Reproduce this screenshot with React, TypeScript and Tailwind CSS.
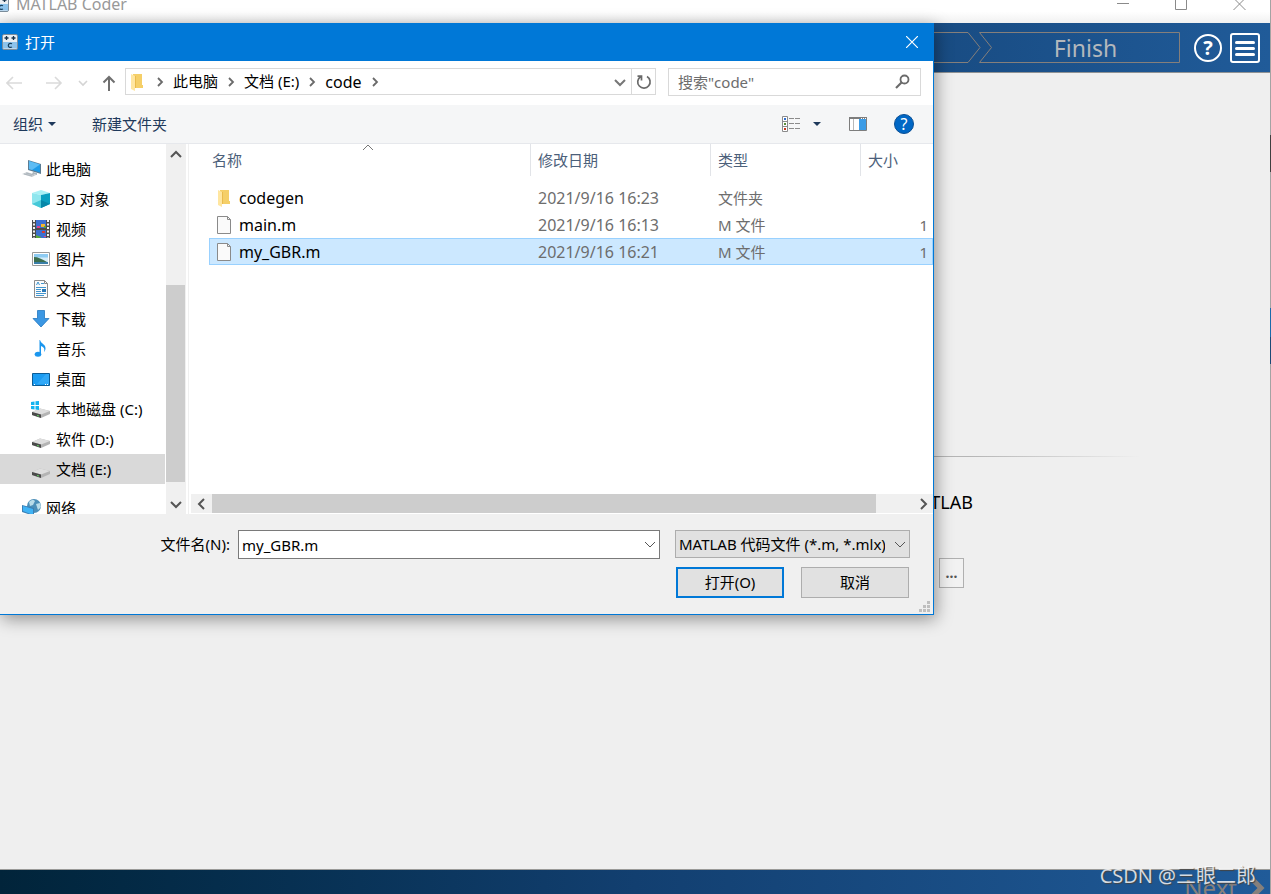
import React, { useState } from 'react';

type IconName =
  | 'pc' | 'cube' | 'video' | 'picture' | 'doc' | 'download' | 'music' | 'desktop' | 'sysdrive' | 'drive' | 'network';

interface TreeItem {
  label: string;
  icon: IconName;
}

const TREE: TreeItem[] = [
  { label: '3D 对象', icon: 'cube' },
  { label: '视频', icon: 'video' },
  { label: '图片', icon: 'picture' },
  { label: '文档', icon: 'doc' },
  { label: '下载', icon: 'download' },
  { label: '音乐', icon: 'music' },
  { label: '桌面', icon: 'desktop' },
  { label: '本地磁盘 (C:)', icon: 'sysdrive' },
  { label: '软件 (D:)', icon: 'drive' },
  { label: '文档 (E:)', icon: 'drive' },
];

const FILES = [
  { name: 'codegen', date: '2021/9/16 16:23', type: '文件夹', size: '', folder: true },
  { name: 'main.m', date: '2021/9/16 16:13', type: 'M 文件', size: '1', folder: false },
  { name: 'my_GBR.m', date: '2021/9/16 16:21', type: 'M 文件', size: '1', folder: false },
];

const CRUMBS = ['此电脑', '文档 (E:)', 'code'];

const DriveBody = () => (
  <>
    <path d="M1 13l8-3.500 10 2.500v3l-9 4-9-3z" fill="#b4b4b4" />
    <path d="M1 13l8-3.500 10 2.500-9 3.500z" fill="#dedede" />
    <path d="M1 13l9 2.500V19l-9-3z" fill="#4a4a4a" />
    <path d="M6 16.500l2 .5" stroke="#5fd35f" />
  </>
);

const TreeIcon = ({ name }: { name: IconName }) => (
  <svg viewBox="0 0 20 20" className="h-5 w-5 shrink-0" aria-hidden="true">
    {name === 'pc' && (
      <>
        <path d="M6 1l13 4v10L6 11z" fill="#5b7c93" />
        <path d="M7 2l11 3.500v8L7 10z" fill="#1f9be8" />
        <path d="M7 2l11 3.500-8 5.500-3-1z" fill="#5dbcf4" />
        <path d="M11 13l4 1v2l-5-1z" fill="#a9b4bc" />
        <path d="M0 15l5-2 9 3-4 2z" fill="#c8ced3" />
        <path d="M2 15l8 2M4 14l8 2" stroke="#9aa4ab" strokeWidth=".6" />
      </>
    )}
    {name === 'cube' && (
      <>
        <path d="M1 4l9-3 9 3-9 2z" fill="#a8f0f5" />
        <path d="M1 4l9 2v13l-9-4z" fill="#8fe6ee" />
        <path d="M10 6l9-2v11l-9 4z" fill="#0a9fc0" />
        <path d="M1 15l9-4v8z" fill="#45c8d8" />
        <path d="M10 11l9 4-9 4z" fill="#0687a8" />
      </>
    )}
    {name === 'video' && (
      <>
        <path d="M1 1h18v18H1z" fill="#4c4c4c" />
        <path d="M5 1h10v8H5zM5 11h10v8H5z" fill="#3c6fd0" />
        <path d="M3 1v18M17 1v18" stroke="#f3f3f3" strokeWidth="2" strokeDasharray="2 1.500" />
        <path d="M6 7h3v2H6zM13 17h2v1h-2z" fill="#e0408a" />
        <path d="M10 5h4v3h-4z" fill="#f4b62c" />
        <path d="M11 12h3v2h-3z" fill="#d83a2e" />
        <path d="M5 16l5 2v1H5zM13 7h2v2h-2z" fill="#58a83c" />
      </>
    )}
    {name === 'picture' && (
      <>
        <path d="M1.500 3.500h17v13h-17z" fill="#fff" stroke="#9a9a9a" />
        <path d="M3 5h14v5H3z" fill="#8ecbf2" />
        <path d="M3 8.500h14V13H3z" fill="#d5ecf8" />
        <path d="M3 8c4 0 8 2 13 5H3z" fill="#3c6e4e" />
        <path d="M3 13h14v2H3z" fill="#3a7ea8" />
      </>
    )}
    {name === 'doc' && (
      <>
        <path d="M3.500 1.500h10l3 3v14h-13z" fill="#fbfbfb" stroke="#8c8c8c" />
        <path d="M13.500 1.500v3h3" fill="none" stroke="#8c8c8c" />
        <path d="M5.500 6l1.500-3 1.500 3M10 4.500h3M5 8.500h10M5 10.500h5M5 12.500h5M5 14.500h10M5 16.500h8" fill="none" stroke="#4296cf" />
        <path d="M11 10h4v3h-4z" fill="#2878b8" />
      </>
    )}
    {name === 'download' && (
      <path d="M6.500 1.500h7v8h4.500L10 18 2 9.500h4.500z" fill="#3b97e3" stroke="#2377c0" strokeWidth=".8" />
    )}
    {name === 'music' && (
      <>
        <path d="M9 1c1 4 6 4 5.500 9-.3 1.700-1 2.500-1.500 3 1-3 0-5-3-6v8H8.500V1z" fill="#1a96ee" />
        <ellipse cx="7" cy="15.200" rx="3.300" ry="2.500" fill="#1a96ee" />
      </>
    )}
    {name === 'desktop' && (
      <>
        <path d="M1.500 4.500h17v12h-17z" fill="#1b9cf2" stroke="#0b5c96" />
        <path d="M6 15l9-10h3v10z" fill="#3fb0fa" opacity=".6" />
        <path d="M3 15.500h1M14 15.500h1M16 15.500h1" stroke="#fff" />
      </>
    )}
    {name === 'sysdrive' && (
      <>
        <DriveBody />
        <path d="M0 3l3.500-.5V6H0zM4.500 2.300L8 2v4H4.500zM0 7h3.500v3.500L0 10zM4.500 7H8v4l-3.500-.4z" fill="#14b4f0" />
      </>
    )}
    {name === 'drive' && <DriveBody />}
    {name === 'network' && (
      <>
        <circle cx="12" cy="8" r="7" fill="#4c8fb8" />
        <path d="M7 4c3-3 5-2 6-1l-2 4-3 1zM14 6l4-1 1 4-3 3z" fill="#b9dce9" />
        <path d="M0 7l12 3v8L0 14z" fill="#3b7fb4" />
        <path d="M1 8l10 3v6L1 13z" fill="#3fb3f5" />
      </>
    )}
  </svg>
);

const FolderIcon = () => (
  <svg viewBox="0 0 18 20" className="h-5 w-[18px] shrink-0" aria-hidden="true">
    <path d="M4 2h9v11h1v3H4z" fill="#f5cf68" />
    <path d="M2 2l4 2v15l-4-2z" fill="#ffe6a0" />
    <path d="M6 4l1 0v12H6z" fill="#e9bb4d" />
  </svg>
);

const FileIcon = () => (
  <svg viewBox="0 0 18 20" className="h-5 w-[18px] shrink-0" aria-hidden="true">
    <path d="M1.500 1.500h10l3 3v14h-13z" fill="#fafafa" stroke="#8a8a8a" />
    <path d="M11.500 1.500v3h3" fill="none" stroke="#8a8a8a" />
  </svg>
);

// app icon: calculator keys above a "C" panel
const CoderIcon = () => (
  <svg viewBox="0 0 16 16" className="h-4 w-4 shrink-0" aria-hidden="true">
    <rect x=".5" y=".5" width="15" height="15" rx="1.500" fill="#e9eef2" stroke="#7c8e9c" />
    <path d="M1 8h14v6.500H1z" fill="#8cc3ec" />
    <path d="M2.500 4h4M4.500 2v4M9.500 4h4M11.500 2v4" stroke="#16324a" strokeWidth="1.300" />
    <path d="M10 9.800C8 8.800 6.300 9.800 6.300 11.400S8 14 10 13" fill="none" stroke="#17405f" strokeWidth="1.200" />
  </svg>
);

interface ChevronProps {
  dir: 'up' | 'down' | 'left' | 'right';
  color?: string;
  width?: number;
}

const CHEVRON_PATHS = {
  up: 'M1 8l5-5 5 5',
  down: 'M1 4l5 5 5-5',
  left: 'M8 1L3 6l5 5',
  right: 'M4 1l5 5-5 5',
};

const Chevron = ({ dir, color = '#555', width = 2 }: ChevronProps) => (
  <svg viewBox="0 0 12 12" className="h-3 w-3 shrink-0" aria-hidden="true">
    <path d={CHEVRON_PATHS[dir]} fill="none" stroke={color} strokeWidth={width} />
  </svg>
);

const CrumbArrow = () => (
  <svg viewBox="0 0 8 10" className="mx-[9px] h-[10px] w-2 shrink-0" aria-hidden="true">
    <path d="M2 1l4 4-4 4" fill="none" stroke="#6a6a6a" strokeWidth="1.800" />
  </svg>
);

const SideItem = ({ item, root, active }: { item: TreeItem; root?: boolean; active?: boolean }) => (
  <li>
    <button
      className={`flex h-[30px] w-full items-center whitespace-nowrap text-left ${root ? 'gap-1 pl-[22px]' : 'gap-[5px] pl-[31px]'} ${active ? 'bg-[#d9d9d9]' : ''}`}
    >
      <TreeIcon name={item.icon} />
      {item.label}
    </button>
  </li>
);

const Sidebar = () => (
  <nav className="flex w-[186px] shrink-0">
    <ul className="flex-1 overflow-hidden pt-[10px]">
      <SideItem item={{ label: '此电脑', icon: 'pc' }} root />
      {TREE.map((item) => (
        <SideItem key={item.label} item={item} active={item.label === '文档 (E:)'} />
      ))}
      <li className="h-[9px]" />
      <SideItem item={{ label: '网络', icon: 'network' }} root />
    </ul>
    <div className="ml-px flex w-5 flex-col bg-[#f0f0f0]">
      <button aria-label="Scroll up" className="flex h-[21px] items-center justify-center">
        <Chevron dir="up" />
      </button>
      <div className="flex-[120]" />
      <div className="mr-px flex-[197] bg-[#cdcdcd]" />
      <div className="flex-[11]" />
      <button aria-label="Scroll down" className="flex h-[21px] items-center justify-center">
        <Chevron dir="down" />
      </button>
    </div>
  </nav>
);

const FileList = ({ selected, onSelect }: { selected: string; onSelect: (name: string) => void }) => (
  <section className="ml-0.5 flex min-w-0 flex-1 flex-col border-l border-[#f0f0f0]">
    <div className="min-h-0 flex-1 overflow-hidden pl-5">
      <table className="w-full table-fixed border-collapse text-left">
        <colgroup>
          <col />
          <col className="w-[180px]" />
          <col className="w-[150px]" />
          <col className="w-[73px]" />
        </colgroup>
        <thead className="text-[#4c607a]">
          <tr className="h-10">
            <th className="relative p-0 align-top font-normal">
              <div className="h-8 pl-[3px] leading-8">名称</div>
              <span className="absolute left-1/2 top-[-2px] -ml-2">
                <Chevron dir="up" color="#777" width={1} />
              </span>
            </th>
            {['修改日期', '类型', '大小'].map((title) => (
              <th key={title} className="p-0 align-top font-normal">
                <div className="h-8 border-l border-[#e2e4e8] pl-[7px] leading-8">{title}</div>
              </th>
            ))}
          </tr>
        </thead>
        <tbody>
          {FILES.map((file) => (
            <tr
              key={file.name}
              onClick={() => onSelect(file.name)}
              className={`h-[27px] cursor-default ${file.name === selected ? 'bg-[#cce8ff] outline outline-1 -outline-offset-1 outline-[#99d1ff]' : ''}`}
            >
              <td className="p-0">
                <div className="flex items-center gap-[5px] pl-[7px] text-base leading-5">
                  {file.folder ? <FolderIcon /> : <FileIcon />}
                  {file.name}
                </div>
              </td>
              <td className="p-0 pl-2 text-base leading-5 text-[#6d6d6d]">{file.date}</td>
              <td className="p-0 pl-2 leading-5 text-[#6d6d6d]">{file.type}</td>
              <td className="p-0 pr-[5px] text-right leading-5 text-[#6d6d6d]">{file.size}</td>
            </tr>
          ))}
        </tbody>
      </table>
    </div>
    <div className="mb-px ml-0.5 flex h-[19px] bg-[#f0f0f0]">
      <button aria-label="Scroll left" className="flex w-[21px] items-center justify-center">
        <Chevron dir="left" />
      </button>
      <div className="flex-[663] bg-[#cdcdcd]" />
      <div className="flex-[37]" />
      <button aria-label="Scroll right" className="flex w-5 items-center justify-center">
        <Chevron dir="right" />
      </button>
    </div>
  </section>
);

const AddressRow = () => (
  <div className="flex h-11 items-center bg-white pr-3">
    <button aria-label="Back" className="ml-[6px]">
      <svg viewBox="0 0 18 14" className="h-[14px] w-[18px]"><path d="M1 7h15M7 1L1 7l6 6" fill="none" stroke="#dadada" strokeWidth="1.600" /></svg>
    </button>
    <button aria-label="Forward" className="ml-[21px]">
      <svg viewBox="0 0 18 14" className="h-[14px] w-[18px]"><path d="M1 7h15M10 1l6 6-6 6" fill="none" stroke="#dadada" strokeWidth="1.600" /></svg>
    </button>
    <button aria-label="Recent" className="ml-[15px]">
      <svg viewBox="0 0 10 12" className="h-3 w-[10px]"><path d="M1 4l4 4 4-4" fill="none" stroke="#d4d4d4" strokeWidth="1.600" /></svg>
    </button>
    <button aria-label="Up" className="ml-[14px]">
      <svg viewBox="0 0 14 16" className="h-4 w-[14px]"><path d="M7 16V2M1.500 7.500L7 2l5.500 5.500" fill="none" stroke="#6f6f6f" strokeWidth="2" /></svg>
    </button>
    <div className="-mt-[3px] ml-[9px] flex h-[27px] min-w-0 flex-1 items-center border border-[#d9d9d9]">
      <span className="ml-[3px]"><FolderIcon /></span>
      {CRUMBS.map((crumb) => (
        <React.Fragment key={crumb}>
          <CrumbArrow />
          <a href="#" className={crumb === 'code' ? 'text-base' : ''}>{crumb}</a>
        </React.Fragment>
      ))}
      <CrumbArrow />
      <button aria-label="History" className="ml-auto mr-[5px]"><Chevron dir="down" color="#777" width={2} /></button>
      <button aria-label="Refresh" className="flex h-full w-6 items-center justify-center border-l border-[#d9d9d9]">
        <svg viewBox="0 0 16 16" className="h-4 w-4"><path d="M4.500 2.700A6.200 6.200 0 1 0 11 2.500M1.500 2.200h4v4.300" fill="none" stroke="#6a6a6a" strokeWidth="1.700" /></svg>
      </button>
    </div>
    <div className="-mt-[3px] ml-3 flex h-7 w-[253px] shrink-0 items-center border border-[#d9d9d9] pr-2">
      <input
        aria-label="搜索"
        placeholder={'搜索"code"'}
        className="h-full min-w-0 flex-1 pl-[9px] text-[15px] placeholder-[#6d6d6d] outline-none"
      />
      <svg viewBox="0 0 18 16" className="h-4 w-[18px]">
        <circle cx="10.500" cy="5.500" r="4" fill="none" stroke="#6a6a6a" strokeWidth="1.800" />
        <path d="M7.500 8.500L2 14" stroke="#6a6a6a" strokeWidth="2.200" />
      </svg>
    </div>
  </div>
);

const Caret = () => (
  <svg viewBox="0 0 8 4" className="h-1 w-2" aria-hidden="true"><path d="M0 0h8L4 4z" fill="#1e395b" /></svg>
);

const Toolbar = () => (
  <div className="flex h-[39px] items-center border-b border-[#e6e8ec] bg-[#f5f6f7] pl-[13px] pr-[19px] text-[#1e395b]">
    <button className="flex items-center gap-[5px]">组织 <Caret /></button>
    <button className="ml-9">新建文件夹</button>
    <button aria-label="View" className="ml-auto flex items-center gap-[13px]">
      <svg viewBox="0 0 18 16" className="h-4 w-[18px]">
        <path d="M.5.5h5v15h-5zM.5 5.500h5M.5 10.500h5" fill="#fff" stroke="#8b8b8b" />
        <path d="M7 2.500h5M13 2.500h5M7 7.500h5M13 7.500h5M7 12.500h5M13 12.500h5" stroke="#8b8b8b" strokeDasharray="5 1" />
        <path d="M2 2h2v2H2z" fill="#2f6fd0" />
        <path d="M2 7h2v2H2z" fill="#5b8f3a" />
        <path d="M2 12h2v2H2z" fill="#c8381e" />
      </svg>
      <Caret />
    </button>
    <button aria-label="Preview pane" className="ml-7">
      <svg viewBox="0 0 18 14" className="h-[14px] w-[18px]">
        <path d="M.5.5h17v13H.5z" fill="#fff" stroke="#7d7d7d" />
        <path d="M0 0h18v2H0z" fill="#7d7d7d" />
        <path d="M10 2h7v11h-7z" fill="#3c9ce6" />
        <path d="M4.500 2v11" stroke="#b8b8b8" />
        <path d="M12 1.500h1M14 1.500h1M16 1.500h1" stroke="#fff" />
      </svg>
    </button>
    <button
      aria-label="Help"
      className="ml-[27px] flex h-5 w-5 items-center justify-center rounded-full border border-[#0a4f94] bg-[#0067c5] text-base leading-5 text-white"
    >
      ?
    </button>
  </div>
);

const OpenDialog = () => {
  const [selected, setSelected] = useState('my_GBR.m');

  return (
    <div
      role="dialog"
      aria-label="打开"
      className="absolute left-0 right-[337px] top-[23px] flex flex-col border-b border-r border-[#0078d7] bg-[#f0f0f0] text-[15px] text-black shadow-[2px_4px_16px_rgba(0,0,0,0.4)]"
    >
      <div className="flex h-[38px] items-center gap-[7px] bg-[#0078d7] pl-[2px] pr-[15px] text-white">
        <CoderIcon />
        <span>打开</span>
        <button aria-label="Close" className="ml-auto">
          <svg viewBox="0 0 12 12" className="h-3 w-3"><path d="M0 0l12 12M12 0L0 12" stroke="#fff" strokeWidth="1.200" /></svg>
        </button>
      </div>
      <AddressRow />
      <Toolbar />
      <div className="flex h-[370px] bg-white">
        <Sidebar />
        <FileList selected={selected} onSelect={setSelected} />
      </div>
      <form className="relative flex flex-col gap-2 pb-4 pr-[23px] pt-4" onSubmit={(e) => e.preventDefault()}>
        <div className="flex items-start">
          <label htmlFor="filename" className="w-[238px] shrink-0 pr-2 text-right leading-7">文件名(N):</label>
          <div className="relative flex-[422]">
            <input
              id="filename"
              value={selected}
              onChange={(e) => setSelected(e.target.value)}
              className="h-[29px] w-full border border-[#7a7a7a] bg-white pl-[3px] pr-6 text-[15px] outline-none"
            />
            <span className="absolute right-1 top-2"><Chevron dir="down" width={1} /></span>
          </div>
          <div className="relative ml-[15px] flex-[235]">
            <select
              aria-label="文件类型"
              className="h-7 w-full appearance-none border border-[#adadad] bg-[#e1e1e1] pl-[3px] pr-6"
            >
              <option>MATLAB 代码文件 (*.m, *.mlx)</option>
            </select>
            <span className="absolute right-1 top-2"><Chevron dir="down" width={1} /></span>
          </div>
        </div>
        <div className="flex justify-end gap-[17px] pr-px">
          <button type="submit" className="h-[31px] w-[108px] border-2 border-[#0078d7] bg-[#e1e1e1]">打开(O)</button>
          <button type="button" className="h-[31px] w-[108px] border border-[#adadad] bg-[#e1e1e1]">取消</button>
        </div>
        <svg viewBox="0 0 12 12" className="absolute bottom-px right-[2px] h-3 w-3" aria-hidden="true">
          <path d="M8 0h3v3H8zM4 4h3v3H4zM8 4h3v3H8zM0 8h3v3H0zM4 8h3v3H4zM8 8h3v3H8z" fill="#bfbfbf" />
        </svg>
      </form>
    </div>
  );
};

const CoderHeader = () => (
  <header className="flex h-[50px] items-center justify-end border-b border-[#8f9294] bg-linear-to-r from-[#01243a] via-[#123f70] to-[#205b99] pr-[10px] pt-px">
    <div className="relative flex h-8 w-[247px] items-center justify-center pl-[58px] text-[23px] text-[#b4b8bc]">
      <svg viewBox="0 0 247 32" className="absolute inset-0 h-8 w-[247px]" aria-hidden="true">
        <path d="M0 .5h35l12 15-12 15H0M46.500 .5h200v30h-200l12-15z" fill="none" stroke="#857f7b" />
      </svg>
      <span>Finish</span>
    </div>
    <button
      aria-label="Help"
      className="ml-[14px] flex h-7 w-7 items-center justify-center rounded-full border-2 border-white font-['Open_Sans'] text-xl font-bold leading-6 text-white"
    >
      ?
    </button>
    <button aria-label="Menu" className="ml-2 flex h-[30px] w-[30px] flex-col items-center justify-center gap-[3px] rounded-[3px] border-2 border-white">
      <span className="h-[3px] w-5 rounded-full bg-white" />
      <span className="h-[3px] w-5 rounded-full bg-white" />
      <span className="h-[3px] w-5 rounded-full bg-white" />
    </button>
  </header>
);

export default function App() {
  return (
    <div className="relative flex h-screen overflow-hidden bg-[#efefef] font-['Noto_Sans','Noto_Sans_CJK_SC',sans-serif]">
      <div className="flex min-w-0 flex-1 flex-col">
        <div className="flex h-[23px] shrink-0 items-start overflow-hidden bg-white bg-linear-to-b from-white from-50% to-[#f1f1f1] pr-6 text-[#999]">
          <span className="-ml-[7px] -mt-1"><CoderIcon /></span>
          <span className="-mt-2 ml-[7px] text-base leading-6">MATLAB Coder</span>
          <button aria-label="Minimize" className="-mt-[3px] ml-auto">
            <svg viewBox="0 0 13 13" className="h-[13px] w-[13px]"><path d="M1 6.500h12" stroke="#8a8a8a" /></svg>
          </button>
          <button aria-label="Maximize" className="-mt-[3px] ml-[45px]">
            <svg viewBox="0 0 13 13" className="h-[13px] w-[13px]"><path d="M1.500.5h11v12h-11z" fill="none" stroke="#8a8a8a" /></svg>
          </button>
          <button aria-label="Close window" className="-mt-[3px] ml-[46px]">
            <svg viewBox="0 0 13 13" className="h-[13px] w-[13px]"><path d="M.5 1l12 12M12.500 1l-12 12" stroke="#8a8a8a" /></svg>
          </button>
        </div>
        <CoderHeader />
        <main className="flex-1 pt-[383px]">
          <div className="h-px max-w-[1140px] bg-linear-to-r from-[#b5b5b5] from-85% to-[#efefef]" />
          <p className="mt-[31px] max-w-[973px] text-right text-[18px] leading-7 text-black">MATLAB</p>
          <div className="mt-[42px] flex max-w-[964px] justify-end">
            <button aria-label="Browse" className="h-[30px] w-[25px] border border-[#b0b0b0] bg-[#f2f2f2] text-sm font-bold leading-7 text-[#555]">...</button>
          </div>
        </main>
        <footer className="flex h-[25px] shrink-0 items-start justify-end overflow-hidden border-t border-[#9a9a98] bg-linear-to-r from-[#01243a] via-[#123f70] to-[#205b99] pr-[5px]">
          <button className="flex items-center gap-3 text-2xl leading-9 text-[#86807c]">
            Next
            <svg viewBox="0 0 16 20" className="h-5 w-4"><path d="M3 1l9 9-9 9" fill="none" stroke="#86807c" strokeWidth="5" /></svg>
          </button>
        </footer>
      </div>
      {/* sliver of the windows behind the right edge */}
      <div className="flex w-px flex-col bg-[#a3a3a3]">
        <div className="mt-[135px] h-[37px] bg-[#3f3f3f]" />
        <div className="mt-[136px] h-[29px] bg-[#1a6bab]" />
        <div className="h-[27px] bg-[#1b4a76]" />
      </div>
      <OpenDialog />
      <span className="absolute bottom-1 right-[15px] font-['Open_Sans','Noto_Sans_CJK_SC',sans-serif] text-xl leading-7 text-white/80 [text-shadow:1px_1px_1px_#444]">CSDN @三眼二郎</span>
    </div>
  );
}
